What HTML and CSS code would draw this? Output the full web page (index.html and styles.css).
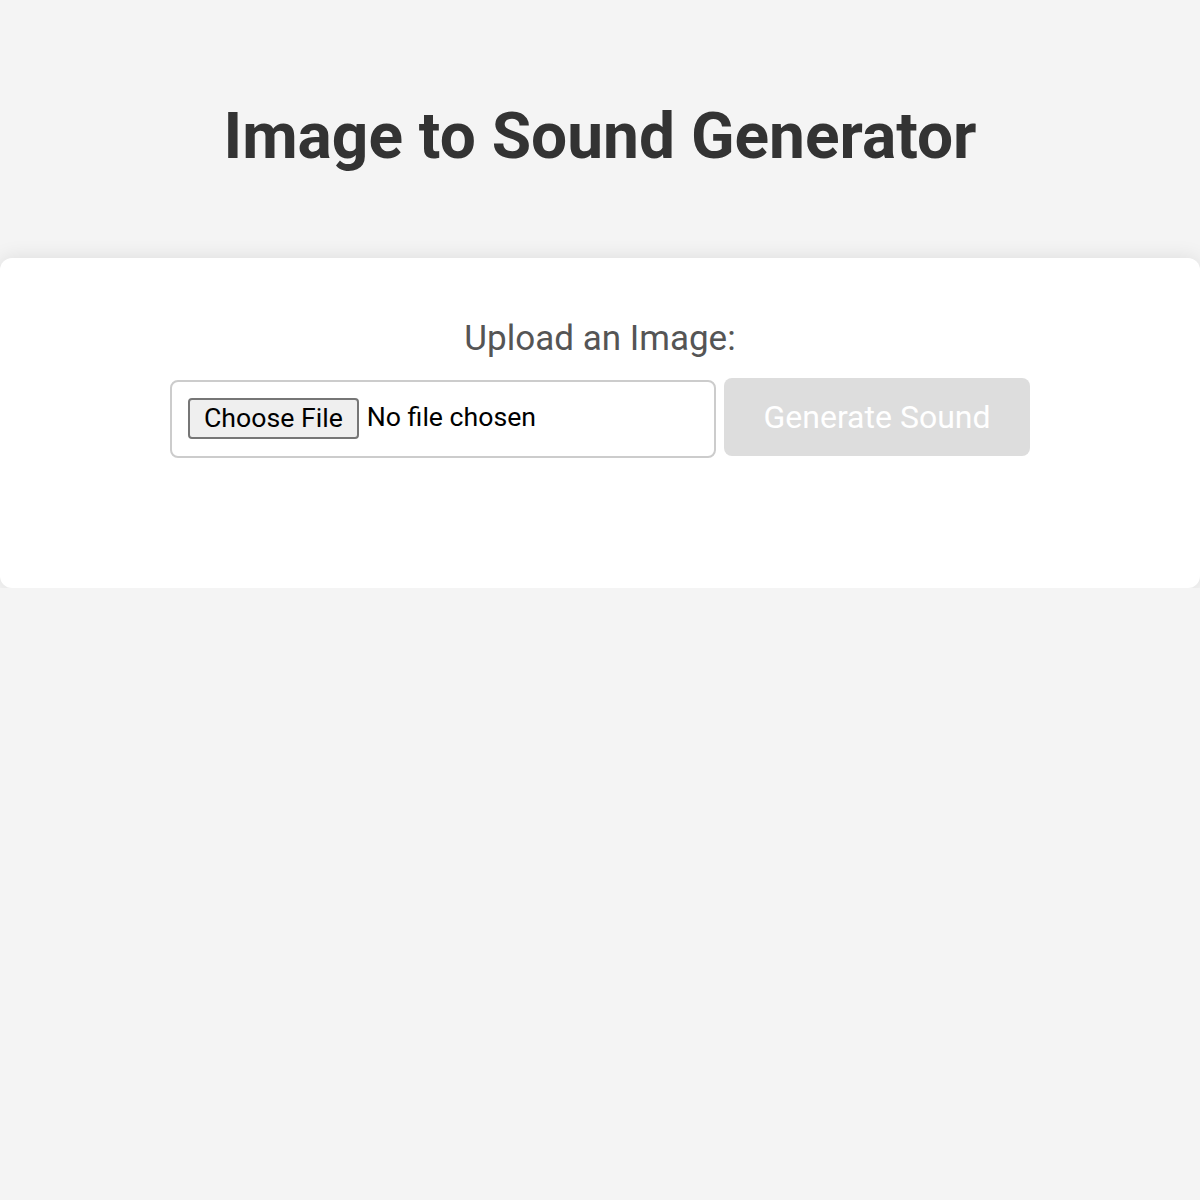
FILE: index.html
```html
<!DOCTYPE html>
<html lang="en">

<head>
    <meta charset="UTF-8">
    <meta name="viewport" content="width=device-width, initial-scale=1.0">
    <title>Image to Sound Generator</title>
    <link rel="stylesheet" href="styles.css">
</head>

<body>
    <h1 class="title">Image to Sound Generator</h1>

    <div class="card">
        <label for="imageInput" class="upload-label">Upload an Image:</label>
        <div class="upload-row">
            <input type="file" id="imageInput" class="file-input" accept="image/*">
            <button id="generateButton" class="generate-button" disabled>Generate Sound</button>
        </div>
        <div id="result" class="result"></div>
    </div>
</body>

</html>
```

FILE: styles.css
```css
body {
    font-family: 'Roboto', 'Liberation Sans', sans-serif;
    background-color: #f4f4f4;
    color: #333333;
    margin: 0;
    padding: 0;
}

.title {
    font-size: 64px;
    font-weight: bold;
    text-align: center;
    color: #333333;
    margin: 0;
    padding: 99px 0 82px;
    line-height: 1.2;
}

.card {
    background-color: #ffffff;
    border-radius: 12px;
    box-shadow: 0 0 20px rgba(0, 0, 0, 0.1);
    padding: 40px;
    text-align: center;
    min-height: 250px;
}

.upload-label {
    display: block;
    font-size: 35px;
    color: #555555;
    margin: 20px 0 19px;
}

.upload-row {
    display: flex;
    justify-content: center;
    align-items: flex-start;
    gap: 8px;
}

.file-input {
    width: 546px;
    height: 78px;
    box-sizing: border-box;
    padding: 16px;
    border: 2px solid #cccccc;
    border-radius: 8px;
    font-family: inherit;
    font-size: 26.67px;
    color: #000000;
    text-align: left;
    margin-top: 2px;
    background-color: #ffffff;
}

.file-input::file-selector-button {
    height: 41px;
    padding: 0 14px;
    margin-right: 8px;
    border: 2px solid #767676;
    border-radius: 4px;
    background-color: #efefef;
    color: #000000;
    font-family: inherit;
    font-size: 26.67px;
    vertical-align: middle;
}

.generate-button {
    width: 306px;
    height: 78px;
    background-color: #dddddd;
    color: #ffffff;
    border: none;
    border-radius: 8px;
    font-family: inherit;
    font-size: 32px;
    cursor: not-allowed;
}

.result {
    margin-top: 40px;
}
```
